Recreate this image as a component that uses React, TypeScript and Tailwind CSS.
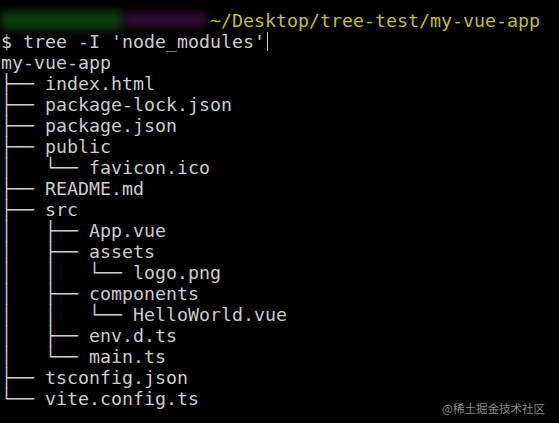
import React from 'react';

const tree: string[] = [
  'my-vue-app',
  '├── index.html',
  '├── package-lock.json',
  '├── package.json',
  '├── public',
  '│   └── favicon.ico',
  '├── README.md',
  '├── src',
  '│   ├── App.vue',
  '│   ├── assets',
  '│   │   └── logo.png',
  '│   ├── components',
  '│   │   └── HelloWorld.vue',
  '│   ├── env.d.ts',
  '│   └── main.ts',
  '├── tsconfig.json',
  '└── vite.config.ts',
];

export default function App() {
  return (
    <div className="relative w-[559px] h-[423px] bg-black overflow-hidden text-[#cccccc] font-['DejaVu_Sans_Mono',monospace] text-[18.27px] leading-[21px] pl-[1px] pt-[10px]">
      <div className="flex items-center h-[21px]">
        {/* hidden user@host, blurred in the original */}
        <span className="flex items-start w-[209px] h-[21px]">
          <span className="w-[122px] h-[19px] mt-[1px] bg-[#0c3d0e] blur-[4px]" />
          <span className="w-[84px] h-[15px] mt-[2px] bg-[#300a33] blur-[4px]" />
        </span>
        <span className="text-[#c1c11e] whitespace-pre">~/Desktop/tree-test/my-vue-app</span>
      </div>
      <div className="whitespace-pre flex items-center h-[21px]">
        <span>$ tree -I 'node_modules'</span>
        <span className="ml-[2px] w-[1px] h-[19px] bg-[#cccccc]" />
      </div>
      {tree.map((line) => (
        <div key={line} className="whitespace-pre h-[21px]">
          {line}
        </div>
      ))}
      <div className="absolute right-[14px] bottom-[9px] text-[11.5px] leading-none text-[#8a8a8a] font-['Noto_Sans_CJK_SC',sans-serif]">
        @稀土掘金技术社区
      </div>
    </div>
  );
}
